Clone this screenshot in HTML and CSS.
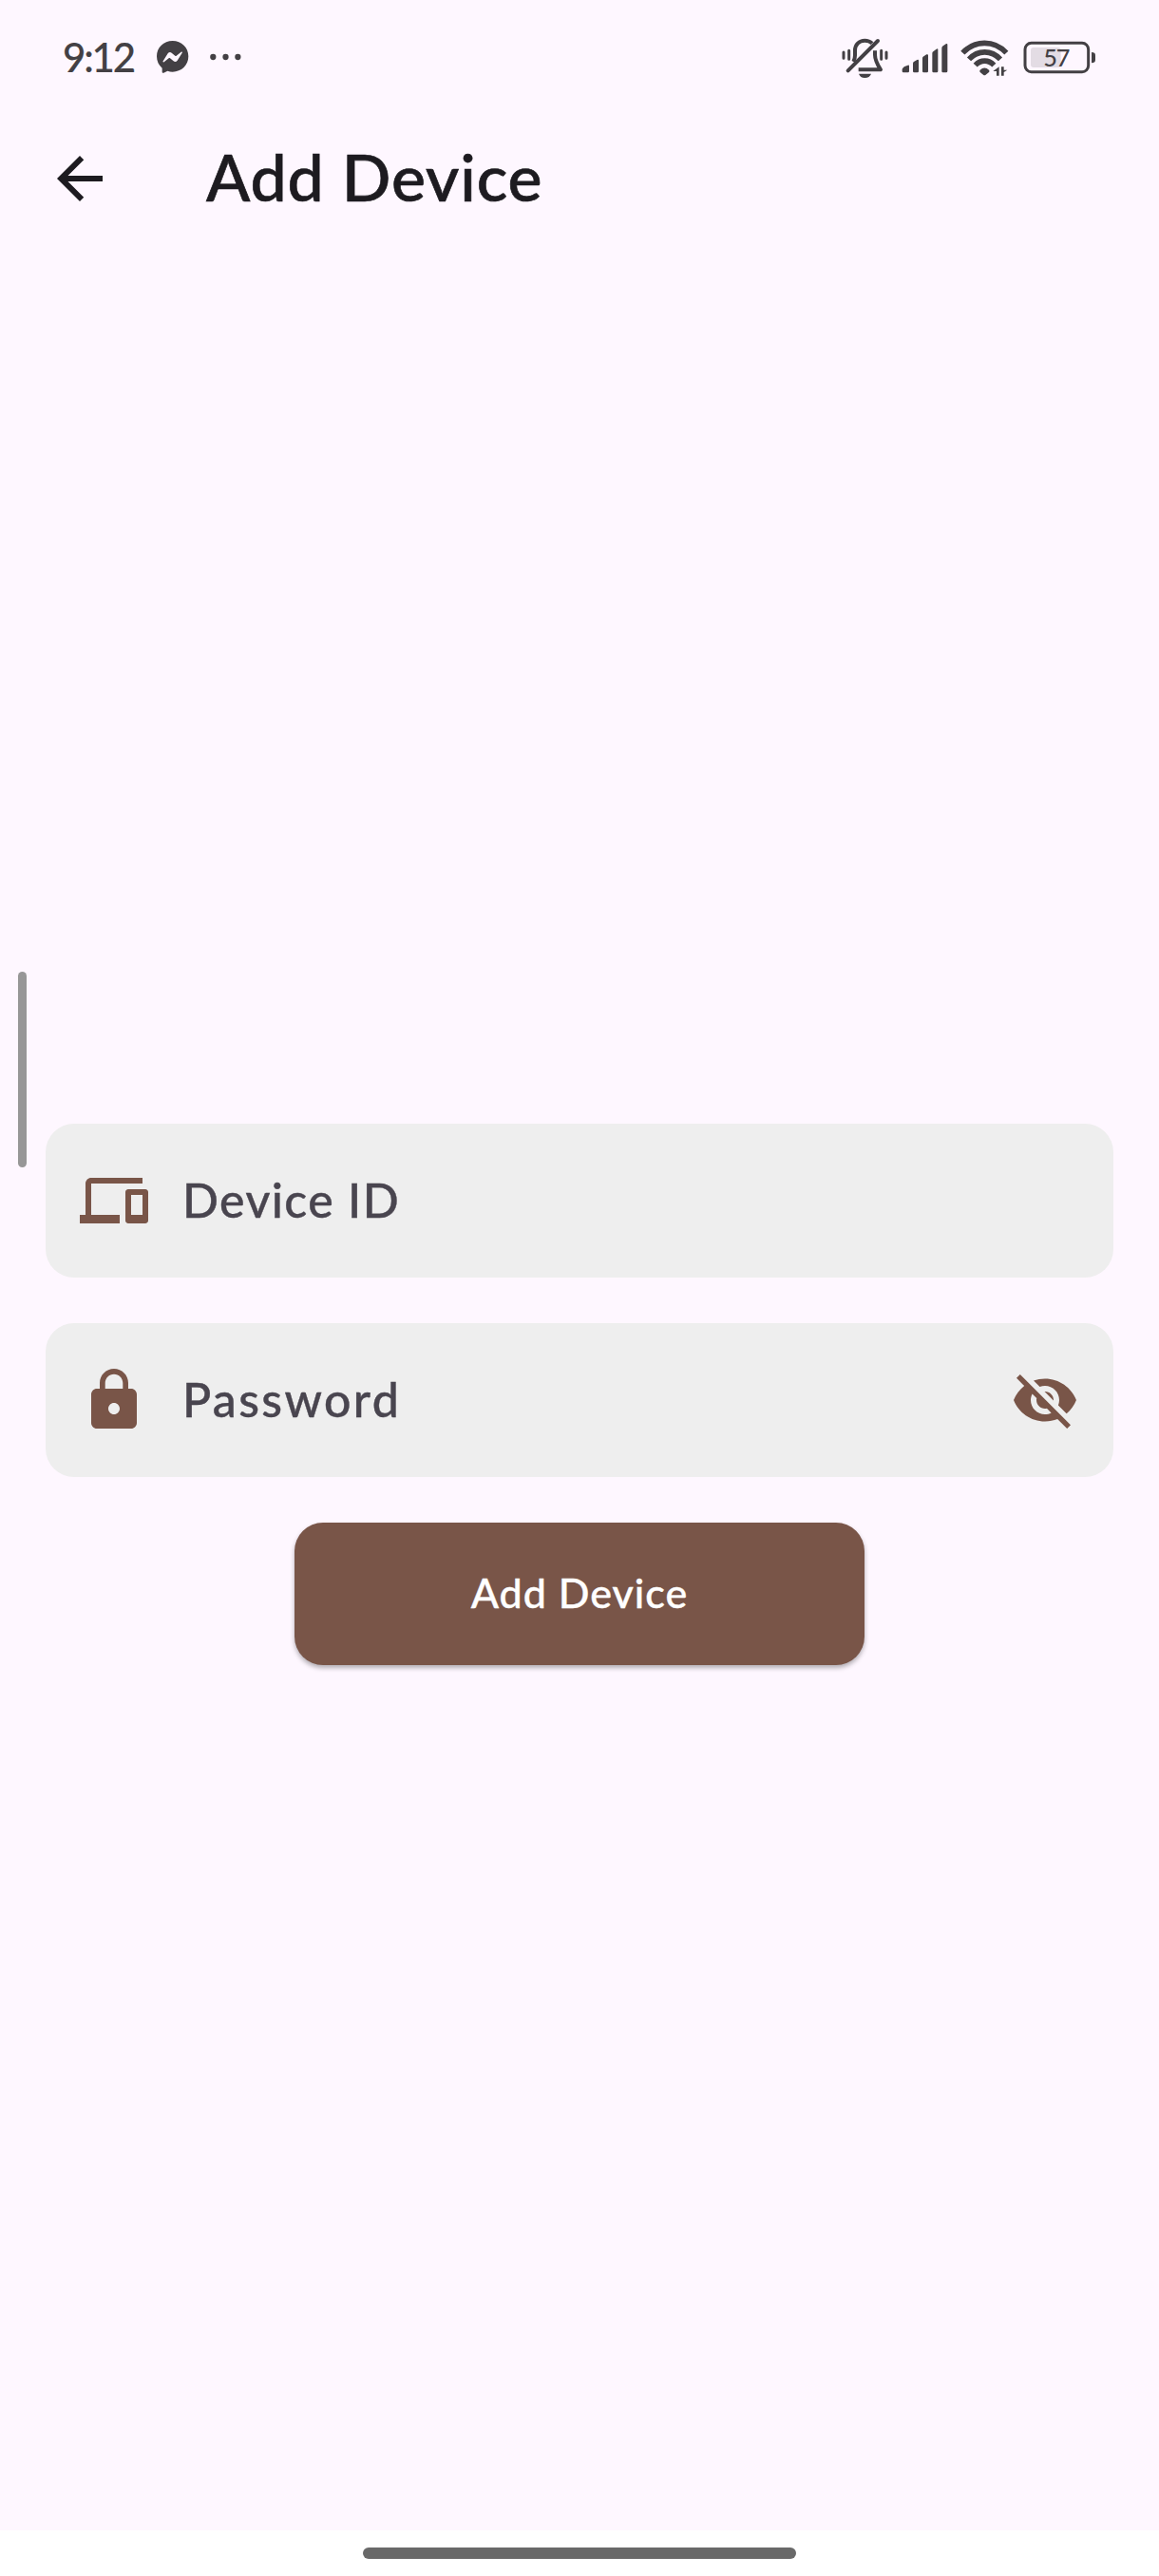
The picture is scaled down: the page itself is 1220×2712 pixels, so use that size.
FILE: index.html
```html
<!DOCTYPE html>
<html lang="en">
<head>
<meta charset="utf-8">
<title>Add Device</title>
<link rel="stylesheet" href="styles.css">
</head>
<body>
<div class="screen">
  <header class="status-bar">
    <span class="clock">9:12</span>
    <svg class="messenger" viewBox="377 71 102 102" aria-hidden="true">
      <path class="ink" d="M427 71c-28 0-50 21-50 49 0 15 6 28 17 37v12c0 3 2 4 5 3l12-6c5 2 11 3 16 3 28 0 50-21 50-49s-22-49-50-49z"/>
      <path class="cut" d="M397 135l15-24c3-4 8-5 12-2l11 9c1 1 3 1 4 0l15-12c2-2 5 1 3 3l-15 24c-3 4-8 5-12 2l-11-9c-1-1-3-1-4 0l-15 12c-2 2-5-1-3-3z"/>
    </svg>
    <svg class="more" viewBox="545 108 100 24" aria-hidden="true">
      <circle class="ink" cx="555" cy="120" r="9.5"/><circle class="ink" cx="595" cy="120" r="9.5"/><circle class="ink" cx="634" cy="120" r="9.5"/>
    </svg>
    <div class="status-icons">
      <svg class="bell" viewBox="51 51 150 135" aria-hidden="true">
        <g class="line">
          <path stroke-width="12" d="M88 132c4-7 5-12 5-20V96c0-18 13-31 31-31 9 0 17 3 23 9"/>
          <path stroke-width="12" stroke-linejoin="round" d="M156 97v13c0 15 6 28 18 47h-70"/>
          <path stroke-width="12" stroke-linecap="round" d="M165 66L71 160"/>
          <path stroke-width="9" stroke-linecap="round" d="M57 102v19M74 97v27M176 97v27M192 102v19"/>
        </g>
        <path class="ink" d="M105 170h39c-3 8-10 13-20 13s-16-5-19-13z"/>
      </svg>
      <svg class="signal" viewBox="240 51 150 135" aria-hidden="true">
        <path class="ink" d="M244 152q2-3 6-5l10-4q4-2 4 3v16q0 4-4 4h-14q-4 0-4-4v-6q0-2 2-4zM276 137q0-4 4-6l9-5q5-2 5 2v34q0 4-4 4h-10q-4 0-4-4zM306 121q0-4 4-6l9-6q5-2 5 3v50q0 4-4 4h-10q-4 0-4-4zM337 105q0-4 4-6l9-7q5-3 5 2v68q0 4-4 4h-10q-4 0-4-4zM367 89q0-4 4-7l9-6q5-3 5 2v84q0 4-4 4h-10q-4 0-4-4z"/>
      </svg>
      <svg class="wifi" viewBox="426 51 153 135" aria-hidden="true">
        <g class="line" stroke-width="17">
          <path d="M433 104c39-41 99-41 138 0"/>
          <path d="M453 124c28-30 71-30 99 0"/>
          <path d="M473 143c17-18 42-18 59 0"/>
        </g>
        <path class="ink" d="M488 158q14-13 28 0 3 4 0 7l-10 8q-4 3-8 0l-10-8q-3-3 0-7z"/>
        <path class="ink" d="M548 148v28h-8v-14h-11zM555 176v-28h8v10h11l-11 7v11z"/>
      </svg>
      <svg class="battery" viewBox="624 51 231 135" aria-hidden="true">
        <rect class="charge" x="648" y="87" width="95" height="63" rx="9"/>
        <rect class="line" x="630" y="73" width="200" height="91" rx="20" stroke-width="9"/>
        <path class="ink" d="M840 102q12 0 12 10v14q0 10-12 10z"/>
        <text class="percent" x="688" y="148" textLength="84">57</text>
      </svg>
    </div>
  </header>

  <div class="app-bar">
    <svg class="icon back" viewBox="0 0 24 24" role="img" aria-label="Back"><path d="M20 11H7.83l5.59-5.59L12 4l-8 8 8 8 1.41-1.41L7.83 13H20v-2z"/></svg>
    <h1 class="title">Add Device</h1>
  </div>

  <main class="form">
    <div class="field">
      <svg class="icon" viewBox="0 0 24 24" aria-hidden="true"><path d="M4 6h18V4H4c-1.1 0-2 .9-2 2v11H0v3h14v-3H4V6zm19 2h-6c-.55 0-1 .45-1 1v10c0 .55.45 1 1 1h6c.55 0 1-.45 1-1V9c0-.55-.45-1-1-1zm-1 9h-4v-7h4v7z"/></svg>
      <span class="label label-device">Device ID</span>
    </div>
    <div class="field">
      <svg class="icon" viewBox="0 0 24 24" aria-hidden="true"><path d="M18 8h-1V6c0-2.76-2.24-5-5-5S7 3.24 7 6v2H6c-1.1 0-2 .9-2 2v10c0 1.1.9 2 2 2h12c1.1 0 2-.9 2-2V10c0-1.1-.9-2-2-2zm-6 9c-1.1 0-2-.9-2-2s.9-2 2-2 2 .9 2 2-.9 2-2 2zm3.1-9H8.9V6c0-1.71 1.39-3.1 3.1-3.1 1.71 0 3.1 1.39 3.1 3.1v2z"/></svg>
      <span class="label label-password">Password</span>
      <svg class="icon" viewBox="0 0 24 24" role="img" aria-label="Show password"><path d="M12 7c2.76 0 5 2.24 5 5 0 .65-.13 1.26-.36 1.83l2.92 2.92c1.51-1.26 2.7-2.89 3.43-4.75-1.73-4.39-6-7.5-11-7.5-1.4 0-2.74.25-3.98.7l2.16 2.16C10.74 7.13 11.35 7 12 7zM2 4.27l2.28 2.28.46.46C3.08 8.3 1.78 10.02 1 12c1.73 4.39 6 7.5 11 7.5 1.55 0 3.03-.3 4.38-.84l.42.42L19.73 22 21 20.73 3.27 3 2 4.27zM7.53 9.8l1.55 1.55c-.05.21-.08.43-.08.65 0 1.66 1.34 3 3 3 .22 0 .44-.03.65-.08l1.55 1.55c-.67.33-1.41.53-2.2.53-2.76 0-5-2.24-5-5 0-.79.2-1.53.53-2.2zm4.31-.78l3.15 3.15.02-.16c0-1.66-1.34-3-3-3l-.17.01z"/></svg>
    </div>
    <button class="submit" type="button">Add Device</button>
  </main>

  <footer class="nav-bar"><div class="handle"></div></footer>
  <div class="edge-handle"></div>
</div>
</body>
</html>
```
FILE: styles.css
```css
* { box-sizing: border-box; }
body { margin: 0; font-family: Lato, "Liberation Sans", sans-serif; font-weight: 500; }
svg { display: block; flex: none; }
.screen { position: relative; display: flex; flex-direction: column; width: 1220px; height: 2712px; background: #fef7ff; }

.status-bar { display: flex; align-items: center; height: 120px; padding: 0 66px; color: #434044; }
.clock { width: 99px; font-size: 42px; line-height: 60px; letter-spacing: -2.2px; -webkit-text-stroke: .2px; white-space: nowrap; }
.ink { fill: #434044; }
.cut { fill: #fef7ff; }
.line { fill: none; stroke: #434044; }
.messenger { width: 34px; height: 34px; }
.more { width: 33px; height: 8px; margin-left: 22px; }
.status-icons { display: flex; margin-left: auto; }
.bell, .signal { width: 50px; height: 45px; }
.signal { margin-left: 13px; }
.wifi { width: 51px; height: 45px; margin-left: 12px; }
.battery { width: 77px; height: 45px; margin-left: 15px; }
.charge { fill: #e3dce4; }
.percent { font-size: 76px; fill: #434044; }

.app-bar { display: flex; align-items: center; height: 136px; padding: 0 48px; }
.icon { width: 72px; height: 72px; fill: #795548; }
.back { fill: #1d1b20; }
.title { margin: 0 0 0 97px; padding-bottom: 5px; font-size: 68px; font-weight: 500; line-height: 84px; letter-spacing: .9px; -webkit-text-stroke: .7px; color: #1d1b20; white-space: nowrap; }

.form { display: flex; flex: 1; flex-direction: column; align-items: center; gap: 48px; padding: 927px 48px 0; }
.field { display: flex; align-items: center; gap: 36px; width: 100%; height: 162px; padding: 0 36px; border-radius: 30px; background: #eee; }
.label { flex: 1; padding-bottom: 2px; font-size: 50px; line-height: 72px; -webkit-text-stroke: .4px; color: #49454f; white-space: nowrap; }
.label-device { letter-spacing: 1.4px; }
.label-password { letter-spacing: 2.4px; }
.submit { width: 600px; height: 150px; padding: 0 0 2px; border: 0; border-radius: 30px; background: #795548; box-shadow: 0 3px 5px rgba(0, 0, 0, .3); color: #fff; font: 500 43px/60px Lato, "Liberation Sans", sans-serif; letter-spacing: 1px; -webkit-text-stroke: .4px; }

.nav-bar { display: flex; justify-content: center; height: 48px; padding-top: 18px; background: #fff; }
.handle { width: 456px; height: 12px; border-radius: 6px; background: #696969; }
.edge-handle { position: absolute; left: 19px; top: 1023px; width: 9px; height: 206px; border-radius: 5px; background: #979797; }
```
